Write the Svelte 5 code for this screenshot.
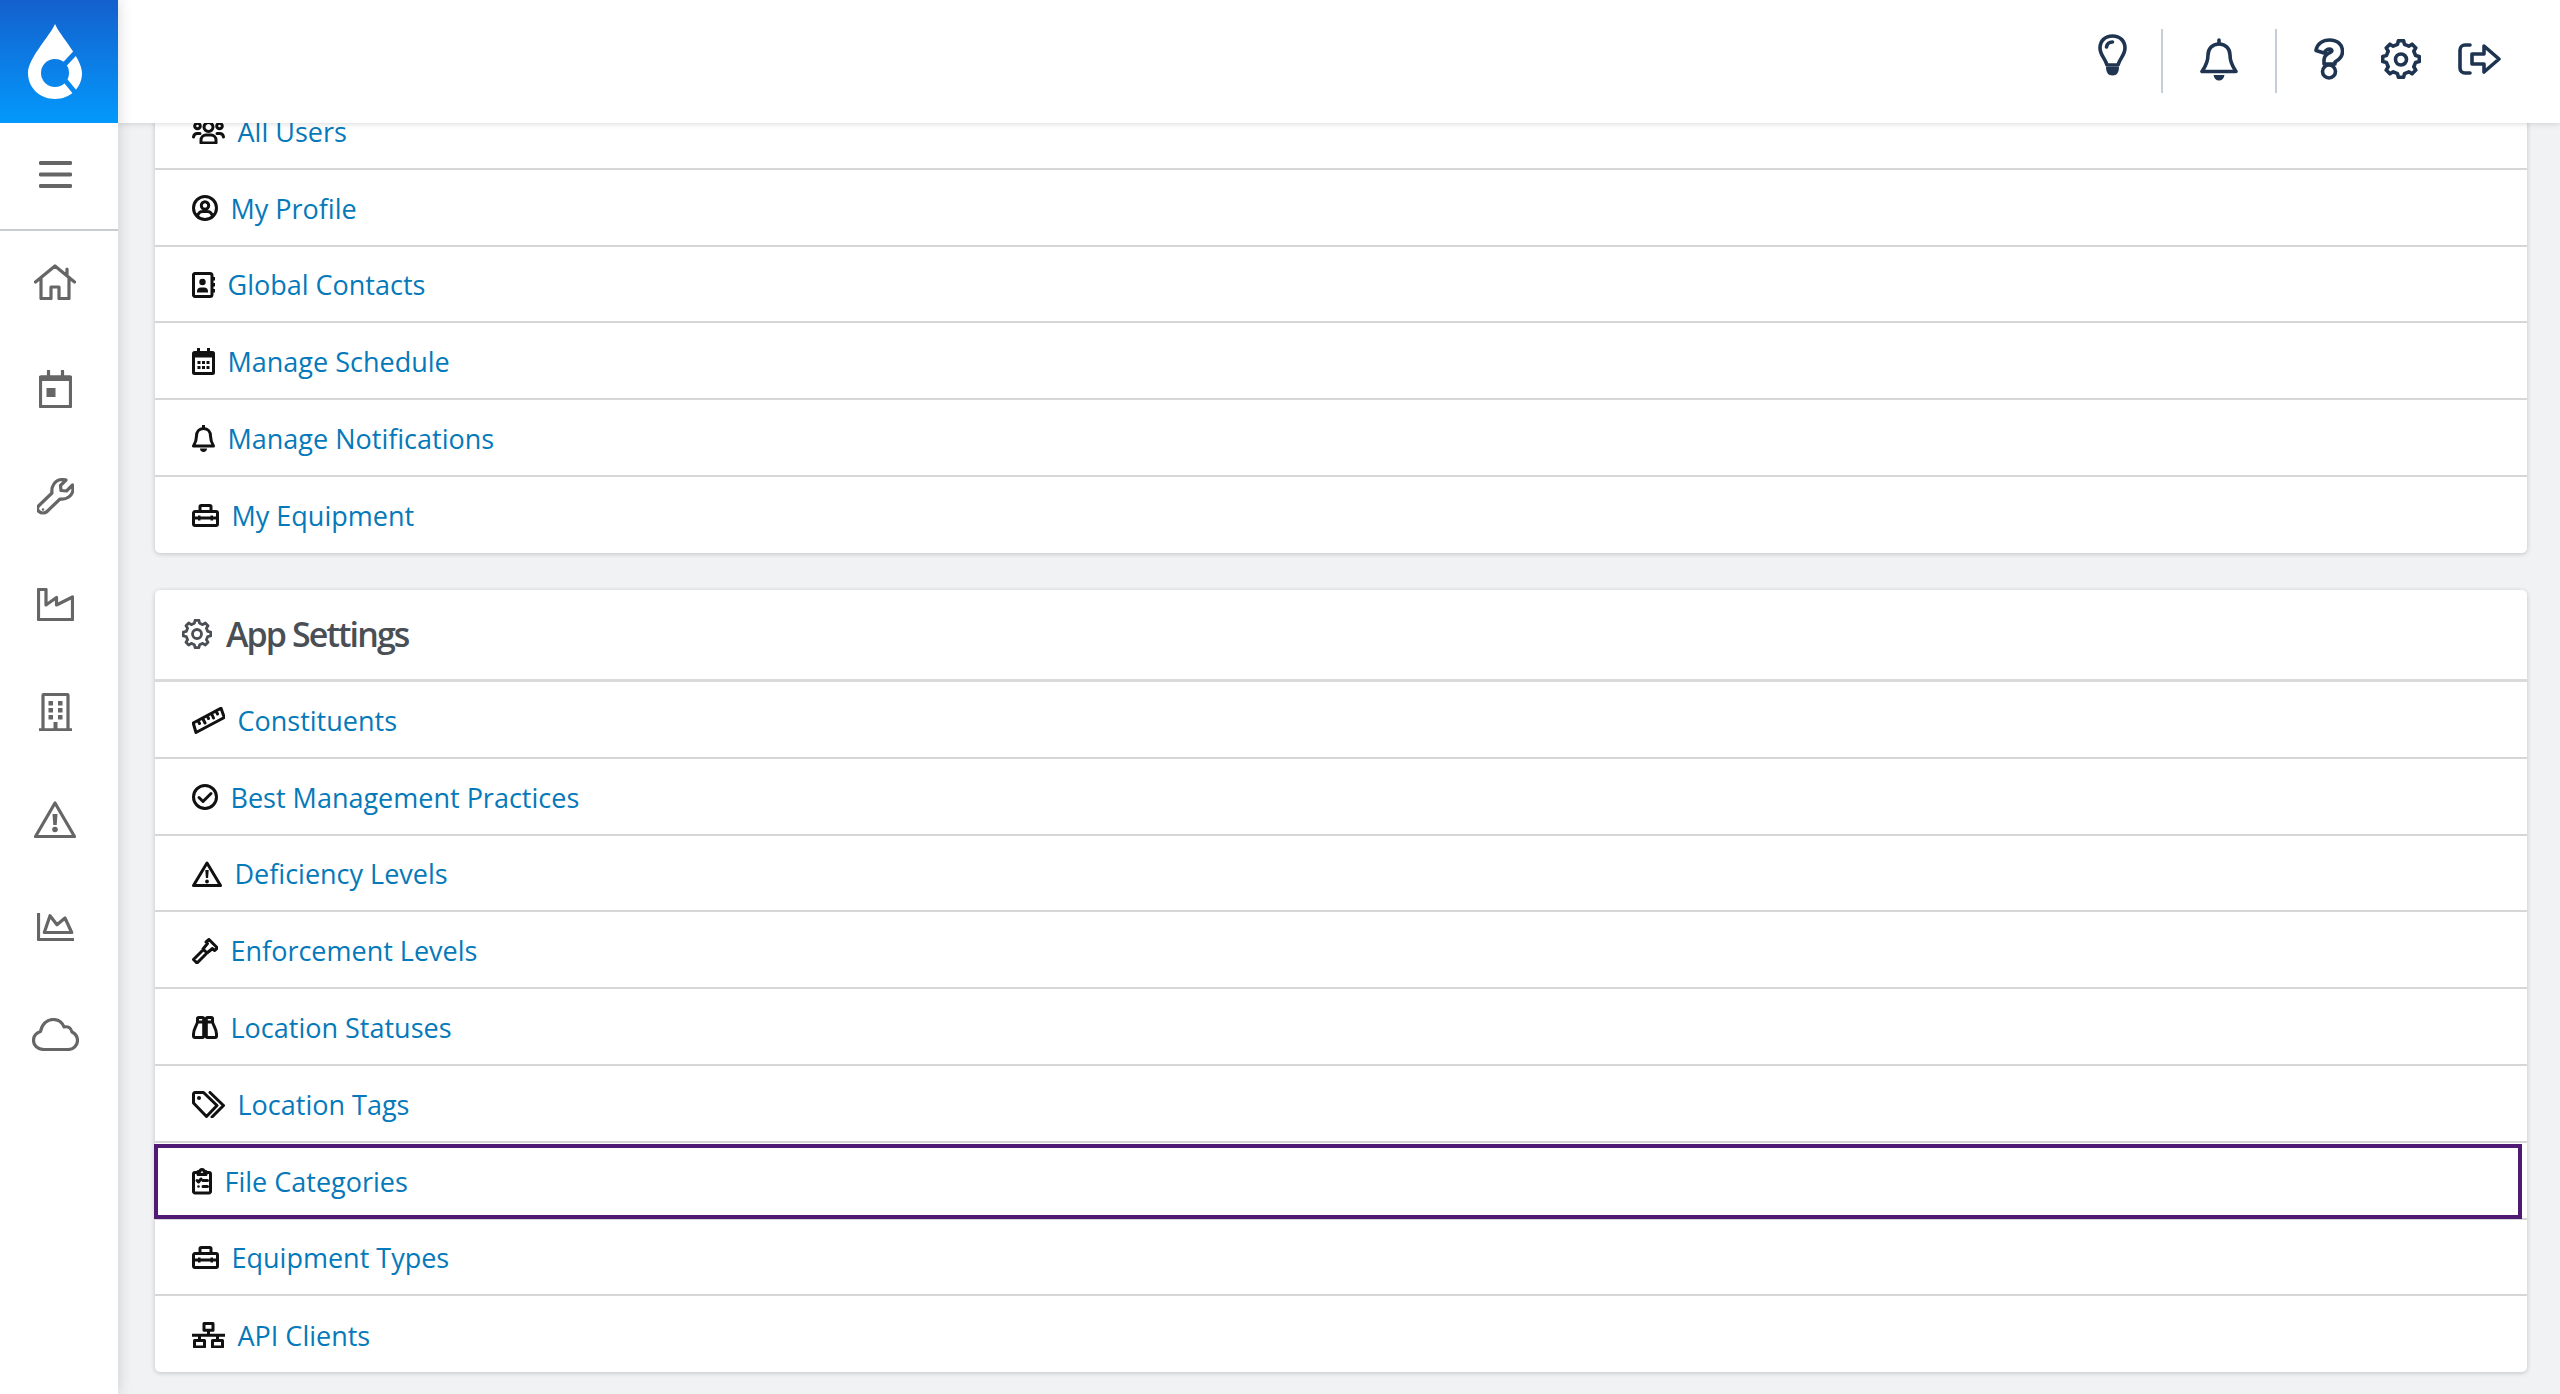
<script>
  // gear outline built from n teeth, used by the header and the section title
  function gear(c, r1, r2, n) {
    let d = '';
    const step = (Math.PI * 2) / n;
    for (let i = 0; i < n; i++) {
      const a = i * step - Math.PI / 2;
      const pts = [
        [r1, a - step * 0.3],
        [r2, a - step * 0.18],
        [r2, a + step * 0.18],
        [r1, a + step * 0.3]
      ];
      for (const [r, t] of pts) {
        d += (d ? 'L' : 'M') + (c + r * Math.cos(t)).toFixed(1) + ' ' + (c + r * Math.sin(t)).toFixed(1);
      }
    }
    return d + 'Z';
  }
  const circle = (x, y, r) => `M${x - r} ${y}a${r} ${r} 0 1 0 ${r * 2} 0a${r} ${r} 0 1 0 ${-r * 2} 0Z`;

  const side = {
    home: { w: 42, h: 36, s: 'M1.5 18L21 2L40.5 18M33 11V5M7 14V34.5H17V23H25V34.5H35V14' },
    calendar: { w: 33, h: 38, s: 'M1.5 7H31.5V36.5H1.5ZM9.5 1V6M23.5 1V6', f: 'M1.5 5.5H31.5V11H1.5ZM7.5 18H16.5V27H7.5Z' },
    wrench: { w: 37, h: 37, s: 'M2 27.5L15 15C14 8 18 2 25 1.5C26.5 1.5 28 1.7 29 2.1L23.5 7.5L24 12.5L29.5 13L35.5 7C35.9 8 36 9.5 36 11C36 18 29 22 23 21L10 33.5C8 35.5 4 35.5 2 33.5C0 31.5 0 29.5 2 27.5Z', f: circle(6, 31.5, 1.2) },
    factory: { w: 37, h: 33, s: 'M1.5 1.5H9V17L19.5 9.5V17L35.5 9V31.5H1.5Z' },
    building: { w: 33, h: 38, s: 'M4 36.5V2.5Q4 1.5 5 1.5H28Q29 1.5 29 2.5V36.5M0 36.8H33', f: 'M9.5 8H14V12.5H9.5ZM19 8H23.5V12.5H19ZM9.5 15H14V19.5H9.5ZM19 15H23.5V19.5H19ZM9.5 22H14V26.5H9.5ZM19 22H23.5V26.5H19ZM14.5 29H18.5V36H14.5Z' },
    warning: { w: 42, h: 37, s: 'M21 2L40.5 35.5H1.5Z', f: 'M18.5 13H23.5L22.7 24H19.3Z' + circle(21, 28.5, 2.8) },
    chart: { w: 37, h: 28, s: 'M1.5 0V26.5H37M7.3 19.5L13 2.7L20 11.7L28 5L34.7 19.5Z' },
    cloud: { w: 47, h: 33, s: 'M12 31.5C5 31.5 1.5 27 1.5 22.5C1.5 18 4 15 8.5 13.5C10 6 15 1.5 21 1.5C26 1.5 30 4 32 9C36 8 39 10 40 14C43 15.5 45.5 18.5 45.5 22.5C45.5 27.5 41.5 31.5 36 31.5Z' }
  };

  const top = {
    bulb: { w: 29, h: 42, s: 'M14.5 2C7 2 2 7 2 14C2 21 7 24 9 31H20C22 24 27 21 27 14C27 7 22 2 14.5 2ZM14.5 8C11 8 9 10 8.5 13', f: 'M8 33H21C21 38 19 41.5 14.5 41.5C10 41.5 8 38 8 33Z' },
    bell: { w: 38, h: 43, s: 'M19 6C12 6 8 11 8 17C8 25 5 29 2 33.5H36C33 29 30 25 30 17C30 11 26 6 19 6ZM19 2V5', f: 'M13.5 37H24.5C24 40.5 22 42.5 19 42.5C16 42.5 14 40.5 13.5 37Z' },
    help: { w: 30, h: 42, s: 'M2 12.5C3 5.5 9 2 15.5 2C23.5 2 28.5 6.5 28.5 13.5C28.5 20 24 22 21 24V26H10V22C10 17 14 15.5 17 14C18.5 13 18 11 15.5 11C13 11 11.5 12.5 10 15Z' + circle(15, 33.5, 6.5) },
    gear: { w: 40, h: 41, s: gear(20, 15, 18.5, 8) + circle(20, 20.5, 5.5) },
    out: { w: 43, h: 32, s: 'M12 2H7A5 5 0 0 0 2 7V25A5 5 0 0 0 7 30H12M14 11H26V3L41 16L26 29V21H14Z' }
  };

  const rowIcons = {
    users: { w: 33, h: 26, s: 'M9 25V22A5 5 0 0 1 14 17H19A5 5 0 0 1 24 22V25ZM1.5 19A4 4 0 0 1 5.5 15.5H8M31.5 19A4 4 0 0 0 27.5 15.5H25' + circle(16.5, 9, 4.5) + circle(5.5, 8, 2.8) + circle(27.5, 8, 2.8) },
    profile: { w: 26, h: 26, s: circle(13, 13, 11.5) + circle(13, 10.5, 3.7) + 'M5.5 21C6.5 17.5 9 16.5 10.5 16.5H15.5C17 16.5 19.5 17.5 20.5 21' },
    contacts: { w: 23, h: 26, s: 'M3 1.5H18A2 2 0 0 1 20 3.5V22.5A2 2 0 0 1 18 24.5H3A1.6 1.6 0 0 1 1.5 22.5V3.5A1.6 1.6 0 0 1 3 1.5Z', f: circle(10.5, 10, 3.2) + 'M5 19.5A4 4 0 0 1 9 15.5H12A4 4 0 0 1 16 19.5V20.5H5ZM20 5H23V8.5H20ZM20 11H23V14.5H20ZM20 17H23V20.5H20Z' },
    calendar: { w: 23, h: 27, s: 'M2.5 4.5H20.5A1 1 0 0 1 21.5 5.5V24.5A1 1 0 0 1 20.5 25.5H2.5A1 1 0 0 1 1.5 24.5V5.5A1 1 0 0 1 2.5 4.5Z', f: 'M1.3 4.3H21.7V9.5H1.3ZM5 0H8V4H5ZM15 0H18V4H15ZM5.5 13H8.5V16H5.5ZM10 13H13V16H10ZM14.5 13H17.5V16H14.5ZM5.5 18H8.5V21H5.5ZM10 18H13V21H10ZM14.5 18H17.5V21H14.5Z' },
    bell: { w: 23, h: 27, s: 'M11.5 3.5C7 3.5 4.5 7 4.5 11C4.5 16 3 18.5 1.5 21H21.5C20 18.5 18.5 16 18.5 11C18.5 7 16 3.5 11.5 3.5Z', f: 'M10 0H13V4H10ZM8 23.5H15C15 25.5 13.5 27 11.5 27C9.5 27 8 25.5 8 23.5Z' },
    toolbox: { w: 27, h: 23, s: 'M3 7.5H24A1.5 1.5 0 0 1 25.5 9V20A1.5 1.5 0 0 1 24 21.5H3A1.5 1.5 0 0 1 1.5 20V9A1.5 1.5 0 0 1 3 7.5ZM8 7V2.8A1.3 1.3 0 0 1 9.3 1.5H17.7A1.3 1.3 0 0 1 19 2.8V7M1.5 14H25.5', f: 'M6 11.5H8.5V16.5H6ZM18.5 11.5H21V16.5H18.5Z' },
    ruler: { w: 33, h: 27, s: 'M1.2 16L29 1.2L32.3 10.5L4 25.5ZM6 13.5L7.5 16.5M10.5 11L13 16M15 8.5L16.5 11.5M19.5 6.5L21.5 11M24 4L25.5 7', sw: 2.6 },
    check: { w: 26, h: 26, s: circle(13, 13, 11.5) + 'M7 13.5L11 17.5L19 9.5' },
    warning: { w: 30, h: 26, s: 'M15 2L28.5 24.5H1.5Z', f: 'M13.3 9H16.7L16.1 17H13.9Z' + circle(15, 20.5, 1.9) },
    gavel: { w: 26, h: 26, s: 'M17 1.5L25.5 10L22.5 12.5L20.5 10.5L15 15L11 11L15.5 5.5L14 4ZM10 13L1.5 21.5L5 25L13.5 16.5' },
    binoculars: { w: 26, h: 23, s: 'M5.5 6V2.7A1.2 1.2 0 0 1 6.7 1.5H10.5A1.2 1.2 0 0 1 11.7 2.7V6M20.5 6V2.7A1.2 1.2 0 0 0 19.3 1.5H15.5A1.2 1.2 0 0 0 14.3 2.7V6M5.5 6H11.7V20.3A1.2 1.2 0 0 1 10.5 21.5H3A1.5 1.5 0 0 1 1.5 20V18C1.5 13 4.5 10 5.5 6ZM20.5 6H14.3V20.3A1.2 1.2 0 0 0 15.5 21.5H23A1.5 1.5 0 0 0 24.5 20V18C24.5 13 21.5 10 20.5 6ZM11.7 11H14.3' },
    tags: { w: 33, h: 27, s: 'M1.5 3A1.5 1.5 0 0 1 3 1.5H11.5L25 14.5L14.5 25.5L1.5 12ZM18 1.5L31.5 14.5L20 26', f: circle(7, 7, 2) },
    clipboard: { w: 20, h: 27, s: 'M6 4.5H3A1.5 1.5 0 0 0 1.5 6V23.5A1.5 1.5 0 0 0 3 25H17A1.5 1.5 0 0 0 18.5 23.5V6A1.5 1.5 0 0 0 17 4.5H14M6 6.5V3.5H8A2 2 0 0 1 12 3.5H14V6.5Z M5 12.5L6.5 14L9 11M11 12.5H15.5M11 18.5H15.5', sw: 2.4, f: circle(6.5, 18.5, 1.3) },
    network: { w: 33, h: 26, s: 'M12 1.5H21V8.3H12ZM16.5 8.3V13M0.5 13.3H32.5M7.5 13.3V18M25.5 13.3V18M2.5 18.5H12.5V25H2.5ZM20.5 18.5H30.5V25H20.5Z' }
  };

  const nav = ['home', 'calendar', 'wrench', 'factory', 'building', 'warning', 'chart', 'cloud'];
  const profileRows = [
    ['users', 'All Users'], ['profile', 'My Profile'], ['contacts', 'Global Contacts'],
    ['calendar', 'Manage Schedule'], ['bell', 'Manage Notifications'], ['toolbox', 'My Equipment']
  ];
  const settingRows = [
    ['ruler', 'Constituents'], ['check', 'Best Management Practices'], ['warning', 'Deficiency Levels'],
    ['gavel', 'Enforcement Levels'], ['binoculars', 'Location Statuses'], ['tags', 'Location Tags'],
    ['clipboard', 'File Categories'], ['toolbox', 'Equipment Types'], ['network', 'API Clients']
  ];
  const titleGear = { w: 30, h: 30, s: gear(15, 11, 13.8, 8) + circle(15, 15, 4.5) };
</script>

{#snippet icon(ic, cls)}
  <svg class={cls} width={ic.w} height={ic.h} viewBox="0 0 {ic.w} {ic.h}" stroke-width={ic.sw}>
    <path class="st" d={ic.s} />
    {#if ic.f}<path class="fl" d={ic.f} />{/if}
  </svg>
{/snippet}

{#snippet rows(list)}
  {#each list as [name, label]}
    <a class="row" class:focused={label === 'File Categories'} href="#top">
      {@render icon(rowIcons[name], 'row-icon')}
      <span>{label}</span>
    </a>
  {/each}
{/snippet}

<div class="shell">
  <aside class="sidebar">
    <div class="logo">
      <svg width="118" height="123" viewBox="0 0 118 123">
        <mask id="drop">
          <path d="M55 24C50 36 28 58 28 73C28 88 40 99 55 99C70 99 82 88 82 73C82 58 60 36 55 24Z" fill="#fff" />
          <circle cx="55" cy="73" r="14" fill="#000" />
          <path d="M63 66L78 50M64 79L78 96" stroke="#000" stroke-width="5" />
        </mask>
        <rect width="118" height="123" fill="#fff" mask="url(#drop)" />
      </svg>
    </div>
    <button class="burger" aria-label="menu">
      <svg width="33" height="27" viewBox="0 0 33 27"><path d="M1.5 2H31.5M1.5 13.5H31.5M1.5 25H31.5" /></svg>
    </button>
    <nav>
      {#each nav as key}
        <div class="nav-item">{@render icon(side[key], 'side-icon')}</div>
      {/each}
    </nav>
  </aside>

  <div class="content">
    <header>
      {@render icon(top.bulb, 'top-icon bulb')}
      <i class="sep"></i>
      {@render icon(top.bell, 'top-icon')}
      <i class="sep"></i>
      {@render icon(top.help, 'top-icon')}
      {@render icon(top.gear, 'top-icon')}
      {@render icon(top.out, 'top-icon')}
    </header>

    <main>
      <section class="card first">
        {@render rows(profileRows)}
      </section>
      <section class="card">
        <h2>{@render icon(titleGear, 'title-icon')}App Settings</h2>
        {@render rows(settingRows)}
      </section>
    </main>
  </div>
</div>

<style>
  :global(body) {
    margin: 0;
    background: #f1f2f4;
    font-family: 'Open Sans', 'Noto Sans', sans-serif;
  }

  .shell {
    display: flex;
    height: 1394px;
    overflow: hidden;
  }

  svg {
    display: block;
    flex: none;
  }

  .st {
    fill: none;
    stroke: currentColor;
    stroke-linejoin: round;
    stroke-linecap: round;
  }

  .fl {
    fill: currentColor;
  }

  .sidebar {
    width: 118px;
    flex: none;
    background: #fff;
    box-shadow: 0 0 14px rgba(0, 0, 0, 0.16);
    z-index: 3;
  }

  .logo {
    height: 123px;
    background: linear-gradient(#1460cd, #0399fc);
  }

  .burger {
    display: flex;
    width: 100%;
    height: 108px;
    padding: 0 8px 4px 0;
    align-items: center;
    justify-content: center;
    background: none;
    border: 0;
    border-bottom: 2px solid #c9cdd1;
    box-sizing: border-box;
  }

  .burger path {
    stroke: #666;
    stroke-width: 3.8;
    stroke-linecap: round;
    fill: none;
  }

  nav {
    margin-top: -3px;
  }

  .nav-item {
    display: flex;
    height: 107.6px;
    padding-right: 8px;
    box-sizing: border-box;
    align-items: center;
    justify-content: center;
    color: #666;
  }

  :global(.side-icon) {
    stroke-width: 3.2;
  }

  .content {
    flex: 1;
    min-width: 0;
    display: flex;
    flex-direction: column;
  }

  header {
    height: 123px;
    flex: none;
    display: flex;
    align-items: center;
    justify-content: flex-end;
    gap: 37px;
    padding: 0 59px 5px 0;
    box-sizing: border-box;
    background: #fff;
    color: #1e3450;
    box-shadow: 0 1px 6px rgba(0, 0, 0, 0.14);
    position: relative;
    z-index: 2;
  }

  :global(.top-icon) {
    stroke-width: 3.6;
  }

  :global(.bulb) {
    margin: 0 -3px 8px 0;
  }

  .sep {
    width: 2px;
    height: 64px;
    margin-top: 4px;
    background: #c3ced9;
  }

  main {
    padding: 0 33px 0 37px;
  }

  .card {
    margin-top: 37px;
    background: #fff;
    box-shadow: 0 1px 5px rgba(0, 0, 0, 0.2);
    border-radius: 5px;
  }

  .card.first {
    margin-top: -30px;
  }

  h2 {
    display: flex;
    align-items: center;
    gap: 14px;
    height: 92px;
    margin: 0;
    padding: 0 0 0 27px;
    box-sizing: border-box;
    border-bottom: 3px solid #d8dadc;
    font-size: 34px;
    font-weight: 600;
    letter-spacing: -1.9px;
    color: #4a4f55;
  }

  :global(.title-icon) {
    stroke-width: 2.8;
  }

  .row {
    position: relative;
    display: flex;
    align-items: center;
    gap: 12.5px;
    height: 76.8px;
    padding: 2px 0 0 37px;
    box-sizing: border-box;
    border-bottom: 2px solid #d5d6d7;
    font-size: 27px;
    color: #0579b9;
    text-decoration: none;
  }

  .row:last-child {
    height: 76px;
    border-bottom: 0;
  }

  :global(.row-icon) {
    color: #111;
    stroke-width: 3;
  }

  .focused::after {
    content: '';
    position: absolute;
    inset: 1px 5px -1px -1px;
    border: 4px solid #4f1a73;
  }
</style>
